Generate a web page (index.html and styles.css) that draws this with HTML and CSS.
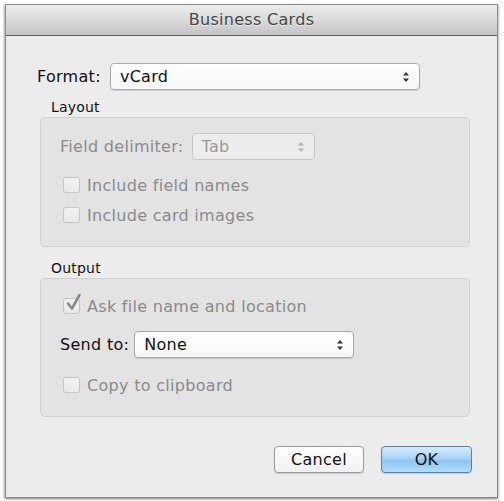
FILE: index.html
```html
<!DOCTYPE html>
<html>
<head>
<meta charset="utf-8">
<link rel="stylesheet" href="styles.css">
</head>
<body>
<div class="stage">
  <div class="window">
    <div class="titlebar">Business Cards</div>
    <div class="content">
      <div class="row format-row">
        <span class="label">Format:</span>
        <div class="popup popup-format"><span>vCard</span>
          <svg class="arrows" width="8" height="12" viewBox="0 0 8 12"><path d="M4 1 L7 4.5 L1 4.5 Z M4 11 L7 7.5 L1 7.5 Z" fill="#333"/></svg>
        </div>
      </div>

      <div class="group-label">Layout</div>
      <div class="group group-layout">
        <div class="row">
          <span class="label disabled">Field delimiter:</span>
          <div class="popup popup-tab disabled"><span>Tab</span>
            <svg class="arrows" width="8" height="12" viewBox="0 0 8 12"><path d="M4 1 L7 4.5 L1 4.5 Z M4 11 L7 7.5 L1 7.5 Z" fill="#b0b0b0"/></svg>
          </div>
        </div>
        <div class="check-row cb1"><span class="box"></span><span class="disabled">Include field names</span></div>
        <div class="check-row cb2"><span class="box"></span><span class="disabled">Include card images</span></div>
      </div>

      <div class="group-label out-label">Output</div>
      <div class="group group-output">
        <div class="check-row cb3"><span class="box checked">
          <svg class="tick" width="18" height="20" viewBox="0 0 18 20"><path d="M4 10.5 L8 15.5 L15.5 2" fill="none" stroke="#8a8a8a" stroke-width="2.6" stroke-linecap="round" stroke-linejoin="round"/></svg>
        </span><span class="disabled">Ask file name and location</span></div>
        <div class="row send-row">
          <span class="label">Send to:</span>
          <div class="popup popup-send"><span>None</span>
            <svg class="arrows" width="8" height="12" viewBox="0 0 8 12"><path d="M4 1 L7 4.5 L1 4.5 Z M4 11 L7 7.5 L1 7.5 Z" fill="#333"/></svg>
          </div>
        </div>
        <div class="check-row cb4"><span class="box"></span><span class="disabled">Copy to clipboard</span></div>
      </div>

      <div class="buttons">
        <div class="btn">Cancel</div>
        <div class="btn btn-default">OK</div>
      </div>
    </div>
  </div>
</div>
</body>
</html>
```

FILE: styles.css
```css
html, body {
  margin: 0;
  padding: 0;
  background: #ffffff;
}
body {
  font-family: "DejaVu Sans", "Liberation Sans", sans-serif;
  font-size: 16px;
  letter-spacing: 0.3px;
  color: #111111;
}
.stage {
  padding: 4px 6px 3px 5px;
}
.window {
  width: 491px;
  height: 492px;
  border: 1px solid #8c8c8c;
  background: #ececec;
  box-shadow: -1px 1px 2px rgba(0,0,0,0.35), 1px 1px 2px rgba(0,0,0,0.25);
  display: flex;
  flex-direction: column;
}
.titlebar {
  height: 30px;
  line-height: 30px;
  border-bottom: 1px solid #5e5e5e;
  background: linear-gradient(#ececec, #d6d6d6 60%, #c4c4c4);
  text-align: center;
  color: #454545;
  text-shadow: 0 1px 0 rgba(255,255,255,0.6);
  font-size: 16px;
}
.content {
  padding: 27px 27px 0 31px;
  display: flex;
  flex-direction: column;
}
.row {
  display: flex;
  align-items: center;
  height: 27px;
}
.label {
  white-space: nowrap;
}
.disabled {
  color: #8a8a8a;
}
.popup {
  position: relative;
  box-sizing: border-box;
  height: 27px;
  border: 1px solid #a9a9a9;
  border-radius: 4px;
  background: linear-gradient(#ffffff, #f7f7f7);
  box-shadow: 0 1px 1px rgba(0,0,0,0.12);
  display: flex;
  align-items: center;
  padding-left: 9px;
  color: #111;
}
.popup .arrows {
  position: absolute;
  right: 9px;
  top: 7px;
}
.popup-format {
  width: 310px;
  margin-left: 9px;
}
.popup-tab {
  width: 123px;
  margin-left: 8px;
  border-color: #c7c7c7;
  background: #ececec;
  color: #9a9a9a;
  box-shadow: none;
}
.popup-send {
  width: 220px;
  margin-left: 5px;
}
.group-label {
  font-size: 14px;
  line-height: 17px;
  height: 17px;
  margin: 9px 0 1px 14px;
  color: #111;
  letter-spacing: 0.2px;
}
.out-label {
  margin-top: 13px;
}
.group {
  margin-left: 3px;
  box-sizing: border-box;
  border: 1px solid #d0d0d0;
  border-radius: 5px;
  background: #e3e3e3;
  padding: 0 0 0 19px;
  display: flex;
  flex-direction: column;
}
.group-layout {
  height: 130px;
  padding-top: 15px;
}
.group-output {
  height: 139px;
  padding-top: 17px;
}
.check-row {
  display: flex;
  align-items: center;
  height: 20px;
  white-space: nowrap;
}
.check-row .box {
  position: relative;
  box-sizing: border-box;
  width: 17px;
  height: 16px;
  margin: 0 7px 0 3px;
  border: 1px solid #c4c4c4;
  border-radius: 3px;
  background: linear-gradient(#f3f3f3, #e9e9e9);
}
.check-row .tick {
  position: absolute;
  left: 0;
  top: -6px;
}
.cb1 { margin-top: 15px; }
.cb2 { margin-top: 10px; }
.send-row { margin-top: 15px; }
.cb4 { margin-top: 17px; }
.buttons {
  display: flex;
  justify-content: flex-end;
  gap: 17px;
  margin-top: 29px;
  margin-right: -2px;
}
.btn {
  box-sizing: border-box;
  width: 90px;
  height: 27px;
  border: 1px solid #9c9c9c;
  border-radius: 4px;
  background: linear-gradient(#ffffff, #f1f1f1);
  box-shadow: 0 1px 1px rgba(0,0,0,0.15);
  display: flex;
  align-items: center;
  justify-content: center;
  color: #111;
}
.btn-default {
  width: 91px;
  border-color: #5a7fa8;
  background: linear-gradient(#d8ebfb, #a9d3f7 45%, #8cc3f2 55%, #b8dcf8);
}
```
